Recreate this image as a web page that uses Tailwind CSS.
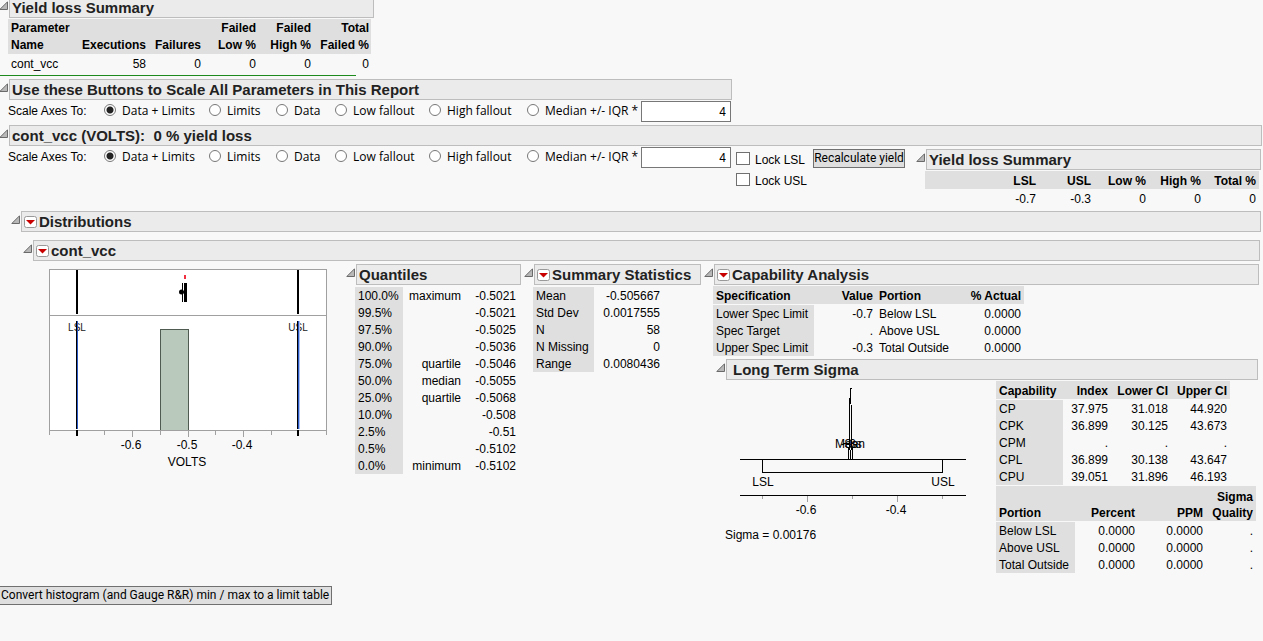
<!DOCTYPE html>
<html lang="en">
<head>
    <meta charset="UTF-8">
    <meta name="viewport" content="width=device-width, initial-scale=1.0">
    <title>Yield loss Summary</title>
    <script src="https://cdn.jsdelivr.net/npm/@tailwindcss/browser@4"></script>
</head>
<body class="bg-[#f8f8f8] text-black text-[12px] leading-[17px] font-['Liberation_Sans',Arial,sans-serif] overflow-x-hidden">
    <!-- Shared icons -->
    <svg class="hidden">
        <symbol id="disclosure" viewBox="0 0 9 9">
            <path d="M.8 8.5H8.5V.8z" fill="#b8b8b8" stroke="#6a6a6a" stroke-width="1" />
        </symbol>
        <symbol id="menu" viewBox="0 0 13 12">
            <rect x=".5" y=".5" width="12" height="11" rx="2" fill="#fff" stroke="#999" />
            <path d="M2 4h9L6.500 8.500z" fill="#c80000" />
        </symbol>
    </svg>

    <!-- Overall yield loss -->
    <section class="-mt-[3px]">
        <div class="flex items-start gap-px -ml-px w-[375px]">
            <svg class="w-[9px] h-[9px] mt-1 shrink-0"><use href="#disclosure" /></svg>
            <h2 class="flex-1 h-[21px] pl-[2px] border border-[#bdbdbd] bg-[#ebebeb] text-[15px] leading-5 font-bold text-[#222]">Yield loss Summary</h2>
        </div>
        <table class="table-fixed border-separate border-spacing-0 w-[363px] ml-2 mt-px text-right [&_th]:pl-[3px] [&_th]:pr-[2px] [&_td]:pt-px [&_td]:pl-[3px] [&_td]:pr-[2px] [&_td]:leading-4">
            <colgroup>
                <col class="w-[140px]"><col class="w-[55px]"><col class="w-[55px]"><col class="w-[55px]"><col class="w-[58px]">
            </colgroup>
            <thead class="[&_th]:h-[36px] [&_th]:bg-[#dfdfdf] [&_th]:border-b [&_th]:border-[#f8f8f8] [&_th]:align-bottom">
                <tr>
                    <th>
                        <div class="flex justify-between items-end"><span class="text-left">Parameter<br>Name</span><span>Executions</span></div>
                    </th>
                    <th>Failures</th>
                    <th>Failed<br>Low %</th>
                    <th>Failed<br>High %</th>
                    <th class="whitespace-nowrap">Total<br>Failed %</th>
                </tr>
            </thead>
            <tbody>
                <tr>
                    <td><div class="flex justify-between"><span>cont_vcc</span><span>58</span></div></td>
                    <td>0</td>
                    <td>0</td>
                    <td>0</td>
                    <td>0</td>
                </tr>
            </tbody>
        </table>
        <hr class="w-[356px] mt-[3px] border-t border-[#1c8a1c]">
    </section>

    <!-- Scale buttons for every parameter -->
    <section class="mt-[3px]">
        <div class="flex items-start gap-px -ml-px w-[733px]">
            <svg class="w-[9px] h-[9px] mt-1 shrink-0"><use href="#disclosure" /></svg>
            <h2 class="flex-1 h-[21px] pl-[2px] border border-[#bdbdbd] bg-[#ebebeb] text-[15px] leading-5 font-bold text-[#222]">Use these Buttons to Scale All Parameters in This Report</h2>
        </div>
        <fieldset class="flex items-center pl-2 pt-px w-[731px]">
            <span class="w-24">Scale Axes To:</span>
            <div class="grid grid-cols-[105px_67px_59px_94px_98px_114px] items-center pb-[3px] whitespace-nowrap text-[12px] font-['Open_Sans',sans-serif] [&_label]:flex [&_label]:items-center [&_label]:gap-[6px] [&_input]:appearance-none [&_input]:size-3 [&_input]:rounded-full [&_input]:border [&_input]:border-[#777] [&_input]:bg-white [&_input]:checked:bg-[radial-gradient(circle,#222_3px,#fff_4px)]">
                <label><input type="radio" name="scale-all" checked>Data + Limits</label>
                <label><input type="radio" name="scale-all">Limits</label>
                <label><input type="radio" name="scale-all">Data</label>
                <label><input type="radio" name="scale-all">Low fallout</label>
                <label><input type="radio" name="scale-all">High fallout</label>
                <label><input type="radio" name="scale-all">Median +/- IQR *</label>
            </div>
            <input type="text" value="4" aria-label="IQR multiplier" class="w-[90px] h-[21px] shrink-0 px-1 border border-[#777] bg-white text-right">
        </fieldset>
    </section>

    <!-- cont_vcc -->
    <section class="mt-[3px] mr-px">
        <div class="flex items-start gap-px -ml-px">
            <svg class="w-[9px] h-[9px] mt-1 shrink-0"><use href="#disclosure" /></svg>
            <h2 class="flex-1 h-[21px] pl-[2px] border border-[#bdbdbd] bg-[#ebebeb] text-[15px] leading-5 font-bold text-[#222] whitespace-pre">cont_vcc (VOLTS):  0 % yield loss</h2>
        </div>

        <div class="flex items-start pr-px">
            <fieldset class="flex items-center pl-2 pt-px w-[731px] shrink-0">
                <span class="w-24">Scale Axes To:</span>
                <div class="grid grid-cols-[105px_67px_59px_94px_98px_114px] items-center pb-[3px] whitespace-nowrap text-[12px] font-['Open_Sans',sans-serif] [&_label]:flex [&_label]:items-center [&_label]:gap-[6px] [&_input]:appearance-none [&_input]:size-3 [&_input]:rounded-full [&_input]:border [&_input]:border-[#777] [&_input]:bg-white [&_input]:checked:bg-[radial-gradient(circle,#222_3px,#fff_4px)]">
                    <label><input type="radio" name="scale-vcc" checked>Data + Limits</label>
                    <label><input type="radio" name="scale-vcc">Limits</label>
                    <label><input type="radio" name="scale-vcc">Data</label>
                    <label><input type="radio" name="scale-vcc">Low fallout</label>
                    <label><input type="radio" name="scale-vcc">High fallout</label>
                    <label><input type="radio" name="scale-vcc">Median +/- IQR *</label>
                </div>
                <input type="text" value="4" aria-label="IQR multiplier" class="w-[90px] h-[21px] shrink-0 px-1 border border-[#777] bg-white text-right">
            </fieldset>

            <div class="flex flex-col gap-1 w-[77px] shrink-0 ml-[5px] pt-[6px] whitespace-nowrap [&_label]:flex [&_label]:items-start [&_label]:gap-[5px] [&_input]:appearance-none [&_input]:w-[14px] [&_input]:h-[13px] [&_input]:border [&_input]:border-[#707070] [&_input]:bg-white">
                <label><input type="checkbox">Lock LSL</label>
                <label><input type="checkbox">Lock USL</label>
            </div>
            <button type="button" class="w-[92px] h-[19px] shrink-0 mt-[3px] border border-[#707070] bg-[#dfdfdf] text-[12px] leading-[17px] whitespace-nowrap font-['Roboto',sans-serif]">Recalculate yield</button>

            <div class="flex-1 ml-[11px] mt-[3px]">
                <div class="flex items-start gap-px">
                    <svg class="w-[9px] h-[9px] mt-1 shrink-0"><use href="#disclosure" /></svg>
                    <h2 class="flex-1 h-[21px] pl-[2px] border border-[#bdbdbd] bg-[#ebebeb] text-[15px] leading-5 font-bold text-[#222]">Yield loss Summary</h2>
                </div>
                <table class="table-fixed border-separate border-spacing-0 w-[334px] ml-[9px] mt-px text-right leading-4 whitespace-nowrap [&_th]:pt-px [&_th]:pr-[3px] [&_td]:pt-px [&_td]:pr-[3px]">
                    <thead class="[&_th]:h-[19px] [&_th]:bg-[#dfdfdf] [&_th]:border-b [&_th]:border-[#f8f8f8]">
                        <tr>
                            <th class="w-[114px]">LSL</th>
                            <th>USL</th>
                            <th>Low %</th>
                            <th>High %</th>
                            <th>Total %</th>
                        </tr>
                    </thead>
                    <tbody>
                        <tr>
                            <td>-0.7</td>
                            <td>-0.3</td>
                            <td>0</td>
                            <td>0</td>
                            <td>0</td>
                        </tr>
                    </tbody>
                </table>
            </div>
        </div>
    </section>

    <!-- Distributions -->
    <section class="mt-1 mr-[2px]">
        <div class="flex items-start gap-px pl-[11px]">
            <svg class="w-[9px] h-[9px] mt-1 shrink-0"><use href="#disclosure" /></svg>
            <div class="flex flex-1 items-center gap-[2px] h-[21px] pl-[2px] border border-[#bdbdbd] bg-[#ebebeb]">
                <button type="button" aria-label="Distributions menu"><svg class="w-[13px] h-3"><use href="#menu" /></svg></button>
                <h2 class="text-[15px] leading-5 font-bold text-[#222]">Distributions</h2>
            </div>
        </div>
        <div class="flex items-start gap-px pl-[23px] mt-2 mr-px">
            <svg class="w-[9px] h-[9px] mt-1 shrink-0"><use href="#disclosure" /></svg>
            <div class="flex flex-1 items-center gap-[2px] h-[21px] pl-[2px] border border-[#bdbdbd] bg-[#ebebeb]">
                <button type="button" aria-label="cont_vcc menu"><svg class="w-[13px] h-3"><use href="#menu" /></svg></button>
                <h3 class="text-[15px] leading-5 font-bold text-[#222]">cont_vcc</h3>
            </div>
        </div>

        <div class="flex items-start mt-[3px] pl-[49px] pr-[2px]">
            <!-- Histogram with outlier plot -->
            <svg class="w-[297px] h-[212px] shrink-0" viewBox="0 0 297 212" shape-rendering="crispEdges">
                <rect x=".5" y="5.5" width="277" height="161" fill="#fff" stroke="#a0a0a0" />
                <path d="M0 51.5H278" stroke="#a0a0a0" />
                <path d="M111.5 166V65.5H139.5V166" fill="#b9c9bb" stroke="#4f5a50" />
                <path d="M0 166.5H278M.5 167v4M55.5 167v4M111.5 167v4M166.5 167v4M222.5 167v4M277.5 167v4M83.5 167v6M139.5 167v6M194.5 167v6" stroke="#a0a0a0" />
                <path d="M28 6V50M249 6V50M28 166V172M249 166V172" stroke="#000" stroke-width="2" />
                <path d="M135 11h2v4h-2z" fill="#f03040" />
                <path d="M135 19h3v19h-3zM133 19h1v19h-1z" />
                <circle cx="132.5" cy="28" r="2.5" shape-rendering="auto" />
                <g font-size="10" text-anchor="middle" fill="#222">
                    <text x="28" y="67">LSL</text>
                    <text x="249" y="67">USL</text>
                </g>
                <path d="M27 57h1v108h-1zM248 57h1v108h-1z" />
                <path d="M28 57h1v108h-1zM249 57h1v108h-1z" fill="#2a58c4" />
                <path d="M250 57h1v108h-1z" fill="#a9c0f5" />
                <g font-size="12" text-anchor="middle">
                    <text x="82" y="185">-0.6</text>
                    <text x="138" y="185">-0.5</text>
                    <text x="193" y="185">-0.4</text>
                    <text x="138" y="202">VOLTS</text>
                </g>
            </svg>

            <!-- Quantiles -->
            <div class="w-[178px] shrink-0 pr-[3px]">
                <div class="flex items-start gap-px">
                    <svg class="w-[9px] h-[9px] mt-1 shrink-0"><use href="#disclosure" /></svg>
                    <h3 class="flex-1 h-[21px] pl-[2px] border border-[#bdbdbd] bg-[#ebebeb] text-[15px] leading-5 font-bold text-[#222]">Quantiles</h3>
                </div>
                <table class="table-fixed border-separate border-spacing-0 w-[164px] ml-[9px] mt-[2px] text-right leading-4 [&_th]:w-12 [&_th]:pt-px [&_th]:pl-[3px] [&_th]:text-left [&_th]:font-normal [&_th]:bg-[#dfdfdf] [&_td]:pt-px [&_td]:pr-[3px]">
                    <tbody>
                        <tr><th scope="row">100.0%</th><td class="w-[61px]">maximum</td><td>-0.5021</td></tr>
                        <tr><th scope="row">99.5%</th><td></td><td>-0.5021</td></tr>
                        <tr><th scope="row">97.5%</th><td></td><td>-0.5025</td></tr>
                        <tr><th scope="row">90.0%</th><td></td><td>-0.5036</td></tr>
                        <tr><th scope="row">75.0%</th><td>quartile</td><td>-0.5046</td></tr>
                        <tr><th scope="row">50.0%</th><td>median</td><td>-0.5055</td></tr>
                        <tr><th scope="row">25.0%</th><td>quartile</td><td>-0.5068</td></tr>
                        <tr><th scope="row">10.0%</th><td></td><td>-0.508</td></tr>
                        <tr><th scope="row">2.5%</th><td></td><td>-0.51</td></tr>
                        <tr><th scope="row">0.5%</th><td></td><td>-0.5102</td></tr>
                        <tr><th scope="row">0.0%</th><td>minimum</td><td>-0.5102</td></tr>
                    </tbody>
                </table>
            </div>

            <!-- Summary Statistics -->
            <div class="w-[180px] shrink-0 pr-[3px]">
                <div class="flex items-start gap-px">
                    <svg class="w-[9px] h-[9px] mt-1 shrink-0"><use href="#disclosure" /></svg>
                    <div class="flex flex-1 items-center gap-[2px] h-[21px] pl-[2px] border border-[#bdbdbd] bg-[#ebebeb] whitespace-nowrap">
                        <button type="button" aria-label="Summary Statistics menu"><svg class="w-[13px] h-3"><use href="#menu" /></svg></button>
                        <h3 class="text-[15px] leading-5 font-bold text-[#222]">Summary Statistics</h3>
                    </div>
                </div>
                <table class="table-fixed border-separate border-spacing-0 w-[130px] ml-[9px] mt-[2px] text-right leading-4 whitespace-nowrap [&_th]:w-[61px] [&_th]:pt-px [&_th]:pl-[3px] [&_th]:text-left [&_th]:font-normal [&_th]:bg-[#dfdfdf] [&_td]:pt-px [&_td]:pr-[3px]">
                    <tbody>
                        <tr><th scope="row">Mean</th><td>-0.505667</td></tr>
                        <tr><th scope="row">Std Dev</th><td>0.0017555</td></tr>
                        <tr><th scope="row">N</th><td>58</td></tr>
                        <tr><th scope="row">N Missing</th><td>0</td></tr>
                        <tr><th scope="row">Range</th><td>0.0080436</td></tr>
                    </tbody>
                </table>
            </div>

            <!-- Capability Analysis -->
            <div class="flex-1">
                <div class="flex items-start gap-px">
                    <svg class="w-[9px] h-[9px] mt-1 shrink-0"><use href="#disclosure" /></svg>
                    <div class="flex flex-1 items-center gap-[2px] h-[21px] pl-[2px] border border-[#bdbdbd] bg-[#ebebeb]">
                        <button type="button" aria-label="Capability Analysis menu"><svg class="w-[13px] h-3"><use href="#menu" /></svg></button>
                        <h3 class="text-[15px] leading-5 font-bold text-[#222]">Capability Analysis</h3>
                    </div>
                </div>
                <table class="table-fixed border-separate border-spacing-0 w-[311px] ml-[9px] mt-px text-right leading-4 whitespace-nowrap [&_th]:pt-px [&_th]:px-[3px] [&_th]:bg-[#dfdfdf] [&_td]:pt-px [&_td]:px-[3px]">
                    <thead class="[&_th]:h-[19px] [&_th]:border-b [&_th]:border-[#f8f8f8]">
                        <tr>
                            <th class="w-[101px] text-left">Specification</th>
                            <th class="w-[62px]">Value</th>
                            <th class="w-[84px] text-left">Portion</th>
                            <th>% Actual</th>
                        </tr>
                    </thead>
                    <tbody class="[&_th]:text-left [&_th]:font-normal">
                        <tr><th scope="row">Lower Spec Limit</th><td>-0.7</td><td class="text-left">Below LSL</td><td>0.0000</td></tr>
                        <tr><th scope="row">Spec Target</th><td>.</td><td class="text-left">Above USL</td><td>0.0000</td></tr>
                        <tr><th scope="row">Upper Spec Limit</th><td>-0.3</td><td class="text-left">Total Outside</td><td>0.0000</td></tr>
                    </tbody>
                </table>

                <div class="flex items-start gap-px pl-3 mt-[3px] mr-px">
                    <svg class="w-[9px] h-[9px] mt-1 shrink-0"><use href="#disclosure" /></svg>
                    <h4 class="flex-1 h-[21px] pl-[6px] border border-[#bdbdbd] bg-[#ebebeb] text-[15px] leading-5 font-bold text-[#222]">Long Term Sigma</h4>
                </div>
                <div class="flex items-start pl-[21px]">
                    <div class="w-[271px] shrink-0">
                        <!-- Normal curve against the spec limits -->
                        <svg class="w-[260px] h-[147px]" viewBox="0 0 260 147" shape-rendering="crispEdges">
                            <path d="M15 79.5H241M37.5 79V92.5H217.5V79M15 115.5H241" fill="none" stroke="#000" />
                            <path d="M37.5 116v3M127.5 116v3M217.5 116v3M82.5 116v6M172.5 116v6" stroke="#a0a0a0" />
                            <path d="M125 8h2v1h-1v16h1v45h-1V24h-1v46h-1V18h1zM123 68h1v11h-1zM125 70h1v9h-1zM127 68h1v11h-1z" />
                            <g font-size="12" text-anchor="middle">
                                <text x="125" y="68">Mean</text>
                                <text x="124" y="68">-3s</text>
                                <text x="127" y="68">+3s</text>
                                <text x="38" y="106">LSL</text>
                                <text x="218" y="106">USL</text>
                                <text x="81" y="134">-0.6</text>
                                <text x="171" y="134">-0.4</text>
                            </g>
                        </svg>
                        <p>Sigma = 0.00176</p>
                    </div>
                    <div class="whitespace-nowrap leading-4">
                        <table class="table-fixed border-separate border-spacing-0 w-[234px] mt-px text-right [&_th]:pt-px [&_th]:px-[3px] [&_th]:bg-[#dfdfdf] [&_td]:pt-px [&_td]:pr-[3px]">
                            <thead class="[&_th]:h-[19px] [&_th]:border-b [&_th]:border-[#f8f8f8]">
                                <tr>
                                    <th class="w-[67px] text-left">Capability</th>
                                    <th class="w-[48px]">Index</th>
                                    <th class="w-[60px]">Lower CI</th>
                                    <th>Upper CI</th>
                                </tr>
                            </thead>
                            <tbody class="[&_th]:text-left [&_th]:font-normal">
                                <tr><th scope="row">CP</th><td>37.975</td><td>31.018</td><td>44.920</td></tr>
                                <tr><th scope="row">CPK</th><td>36.899</td><td>30.125</td><td>43.673</td></tr>
                                <tr><th scope="row">CPM</th><td>.</td><td>.</td><td>.</td></tr>
                                <tr><th scope="row">CPL</th><td>36.899</td><td>30.138</td><td>43.647</td></tr>
                                <tr><th scope="row">CPU</th><td>39.051</td><td>31.896</td><td>46.193</td></tr>
                            </tbody>
                        </table>
                        <table class="table-fixed border-separate border-spacing-0 w-[260px] mt-px text-right [&_th]:pt-px [&_th]:px-[3px] [&_th]:bg-[#dfdfdf] [&_td]:pt-px [&_td]:pr-[3px]">
                            <thead class="[&_th]:h-[36px] [&_th]:align-bottom [&_th]:border-b [&_th]:border-[#f8f8f8]">
                                <tr>
                                    <th class="w-[79px] text-left">Portion</th>
                                    <th class="w-[63px]">Percent</th>
                                    <th class="w-[68px]">PPM</th>
                                    <th>Sigma<br>Quality</th>
                                </tr>
                            </thead>
                            <tbody class="[&_th]:text-left [&_th]:font-normal">
                                <tr><th scope="row">Below LSL</th><td>0.0000</td><td>0.0000</td><td>.</td></tr>
                                <tr><th scope="row">Above USL</th><td>0.0000</td><td>0.0000</td><td>.</td></tr>
                                <tr><th scope="row">Total Outside</th><td>0.0000</td><td>0.0000</td><td>.</td></tr>
                            </tbody>
                        </table>
                    </div>
                </div>
            </div>
        </div>
    </section>

    <button type="button" class="block h-[19px] -ml-[2px] mt-[13px] px-[2px] border border-[#707070] bg-[#dfdfdf] text-[12px] leading-[17px] font-['Roboto',sans-serif]">Convert histogram (and Gauge R&amp;R) min / max to a limit table</button>
</body>
</html>
